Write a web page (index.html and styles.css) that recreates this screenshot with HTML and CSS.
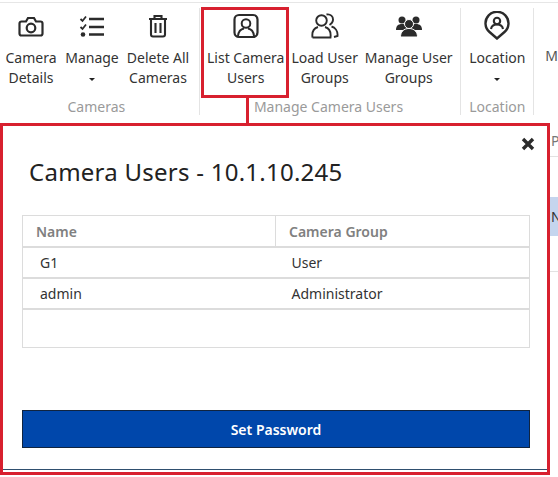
FILE: index.html
```html
<!DOCTYPE html>
<html lang="en">
<head>
<meta charset="utf-8">
<title>Camera Users</title>
<link rel="stylesheet" href="styles.css">
</head>
<body>
<div class="page">
  <div class="ribbon">
    <section class="group group-cameras">
      <div class="tools">
        <div class="tool w62">
          <svg class="icon" width="26" height="24" viewBox="0 0 26 24"><path d="M3.500 7.500h4.500l2-3.500h6l2 3.500h4.500a2 2 0 0 1 2 2v10a2 2 0 0 1-2 2h-19a2 2 0 0 1-2-2v-10a2 2 0 0 1 2-2z" fill="none" stroke="#2b2b2b" stroke-width="2.200"/><circle cx="13" cy="14" r="4.300" fill="none" stroke="#2b2b2b" stroke-width="2.200"/></svg>
          <span class="label">Camera<br>Details</span>
        </div>
        <div class="tool w60">
          <svg class="icon" width="26" height="24" viewBox="0 0 26 24"><path d="M1.500 5l2 2 3.500-4.500M1.500 13l2 2 3.500-4.500" fill="none" stroke="#2b2b2b" stroke-width="1.800"/><circle cx="4" cy="20.500" r="2.300" fill="#2b2b2b"/><path d="M10 5h15M10 13h15M10 20.500h15" stroke="#2b2b2b" stroke-width="2.600"/></svg>
          <span class="label">Manage<br><i class="caret"></i></span>
        </div>
        <div class="tool w72">
          <svg class="icon" width="26" height="24" viewBox="0 0 26 24"><path d="M4 5h18M9.500 4.500v-2.500h7v2.500M6 5.500v15a2 2 0 0 0 2 2h10a2 2 0 0 0 2-2v-15M10.500 9v10M15.500 9v10" fill="none" stroke="#2b2b2b" stroke-width="2.100"/></svg>
          <span class="label">Delete All<br>Cameras</span>
        </div>
      </div>
      <div class="group-name name-cameras">Cameras</div>
    </section>
    <section class="group group-users">
      <div class="tools">
        <div class="tool w92">
          <svg class="icon" width="26" height="24" viewBox="0 0 26 24"><rect x="1.500" y="1" width="23" height="22" rx="4.500" fill="none" stroke="#2b2b2b" stroke-width="2.200"/><circle cx="13" cy="9.500" r="4.300" fill="none" stroke="#2b2b2b" stroke-width="2"/><path d="M5 22c.5-4.500 3-7 6-7.500M21 22c-.5-4.500-3-7-6-7.500" fill="none" stroke="#2b2b2b" stroke-width="2"/></svg>
          <span class="label">List Camera<br>Users</span>
        </div>
        <div class="tool w66">
          <svg class="icon" width="28" height="26" viewBox="0 0 28 26"><circle cx="10.500" cy="7.500" r="5.300" fill="none" stroke="#2b2b2b" stroke-width="1.900"/><path d="M1.500 24.500c-.8-6 2-9.500 5.500-10.500M14 14c3.500 1 6.200 4.500 5.500 10.500h-18M15.500 1.500c4-.8 6.800 2 6.500 5.500-.2 2.500-1.800 4-3.500 5M20.500 13.500c3.500 1 6.500 4.500 6 9.500l-3.500 1" fill="none" stroke="#2b2b2b" stroke-width="1.900"/></svg>
          <span class="label">Load User<br>Groups</span>
        </div>
        <div class="tool w102">
          <svg class="icon" width="26" height="24" viewBox="0 0 26 24"><circle cx="6" cy="6" r="3.500" fill="#2b2b2b"/><circle cx="20" cy="6" r="3.500" fill="#2b2b2b"/><path d="M0 16c0-4 2-6 6-6s6 2 6 6zM14 16c0-4 2-6 6-6s6 2 6 6z" fill="#2b2b2b"/><circle cx="13" cy="10" r="4.500" fill="#2b2b2b" stroke="#fff"/><path d="M4.500 23c0-5 3-8.500 8.500-8.500s8.500 3.500 8.500 8.500z" fill="#2b2b2b" stroke="#fff"/></svg>
          <span class="label">Manage User<br>Groups</span>
        </div>
      </div>
      <div class="group-name name-users">Manage Camera Users</div>
    </section>
    <section class="group group-location">
      <div class="tools">
        <div class="tool w72">
          <svg class="icon icon-pin" width="26" height="29" viewBox="0 0 26 29"><path d="M13 27.500l-7.500-6.500a11.500 11.500 0 1 1 15 0z" fill="none" stroke="#2b2b2b" stroke-width="2.400"/><circle cx="13" cy="10" r="3.200" fill="none" stroke="#2b2b2b" stroke-width="2.100"/><path d="M7 18c.5-3 3-4.500 6-4.500s5.500 1.500 6 4.500" fill="none" stroke="#2b2b2b" stroke-width="2.100"/></svg>
          <span class="label">Location<br><i class="caret"></i></span>
        </div>
      </div>
      <div class="group-name">Location</div>
    </section>
    <section class="group-more">
      <span class="label">M</span>
    </section>
  </div>
  <div class="lower">
    <div class="modal">
      <div class="modal-inner">
        <svg class="close" width="14" height="14" viewBox="0 0 14 14"><path d="M2 2l10 10M12 2L2 12" stroke="#2b2b2b" stroke-width="3.400"/></svg>
        <h1 class="title">Camera Users - 10.1.10.245</h1>
        <table class="users">
          <thead>
            <tr><th class="col-name">Name</th><th class="col-group">Camera Group</th></tr>
          </thead>
          <tbody>
            <tr><td>G1</td><td>User</td></tr>
            <tr><td>admin</td><td>Administrator</td></tr>
            <tr class="empty"><td></td><td></td></tr>
          </tbody>
        </table>
        <button class="primary" type="button">Set Password</button>
      </div>
    </div>
    <div class="behind">
      <div class="behind-head">P</div>
      <div class="behind-row">N</div>
      <div class="behind-rest"></div>
    </div>
  </div>
  <div class="callout"></div>
  <div class="callout-link"></div>
</div>
</body>
</html>
```

FILE: styles.css
```css
* { box-sizing: border-box; }
html, body { margin: 0; padding: 0; background: #fff; }
body { font-family: "Noto Sans", "Open Sans", sans-serif; color: #2b2b2b; }
.page { position: relative; width: 558px; height: 477px; overflow: hidden; }

.ribbon { display: flex; height: 121px; margin-top: 2px; border-top: 1px solid #e6e6e6; padding-top: 5px; }
.group { display: flex; flex-direction: column; height: 107px; border-right: 1px solid #e4e4e4; }
.group-cameras { width: 200px; }
.group-users { width: 262px; }
.group-location { width: 73px; }
.tools { display: flex; flex: 1; }
.tool { display: flex; flex-direction: column; align-items: center; padding-top: 5px; text-align: center; }
.w62 { width: 62px; } .w60 { width: 60px; } .w72 { width: 72px; }
.w92 { width: 92px; } .w66 { width: 66px; } .w102 { width: 102px; }
.icon { display: block; height: 26px; flex: none; }
.icon-pin { height: 29px; margin-top: -2px; margin-bottom: -1px; }
.label { margin-top: 9px; font-size: 14px; line-height: 20px; white-space: nowrap; color: #333; }
.caret { display: inline-block; width: 0; height: 0; border: 3px solid transparent; border-top: 3.500px solid #222; border-bottom: 0; vertical-align: 2px; }
.group-name { height: 20px; margin-bottom: -2px; font-size: 14px; line-height: 20px; text-align: center; color: #9a9a9a; }
.name-cameras { padding-right: 6px; }
.name-users { padding-right: 3px; }
.group-more { padding: 29px 0 0 11px; }
.group-more .label { display: block; color: #555; }

.lower { display: flex; height: 352px; }
.modal { width: 550px; height: 352px; flex: none; border: 3.500px solid #d8202f; background: #fff; }
.modal-inner { position: relative; height: 343.500px; border-bottom: 1px solid #2f4f6f; padding: 28px 0 0 19px; }
.close { position: absolute; top: 11px; right: 12px; }
.title { margin: 0 0 25px 7px; font-size: 24px; line-height: 36px; font-weight: 400; color: #222; letter-spacing: .25px; }

.users { width: 508px; height: 133px; table-layout: fixed; border-collapse: collapse; border: 1px solid #dcdcdc; }
.users th, .users td { padding: 0; text-align: left; font-size: 14px; color: #333; }
.users th { height: 31px; padding-top: 2px; font-weight: 600; color: #808080; border-bottom: 2px solid #dcdcdc; }
.users td { height: 31px; padding-top: 1px; border-bottom: 2px solid #dcdcdc; }
.users .col-name { width: 253px; padding-left: 13px; border-right: 1px solid #dcdcdc; }
.users .col-group { padding-left: 13px; }
.users td:first-child { padding-left: 17px; }
.users td:last-child { padding-left: 16px; }
.users .empty td { height: auto; border-bottom: 0; }

.primary { display: block; width: 508px; height: 38px; margin-top: 62px; padding-top: 2px; border: 1px solid #10243f; background: #0047ab; color: #fff; font-family: inherit; font-size: 14px; font-weight: 600; }

.behind { flex: 1; font-size: 14px; color: #777; }
.behind-head { height: 34px; padding: 8px 0 0 1px; border-bottom: 1px solid #e2e2e2; line-height: 20px; }
.behind-row { height: 39px; margin-top: 40px; padding: 10px 0 0 1px; background: #c5d5ee; color: #333; line-height: 20px; }
.behind-rest { height: 36px; border-bottom: 1px solid #e2e2e2; }

.callout { position: absolute; left: 201px; top: 7px; width: 88px; height: 91px; border: 3px solid #d8202f; }
.callout-link { position: absolute; left: 246px; top: 98px; width: 3px; height: 26px; background: #d8202f; }
```
